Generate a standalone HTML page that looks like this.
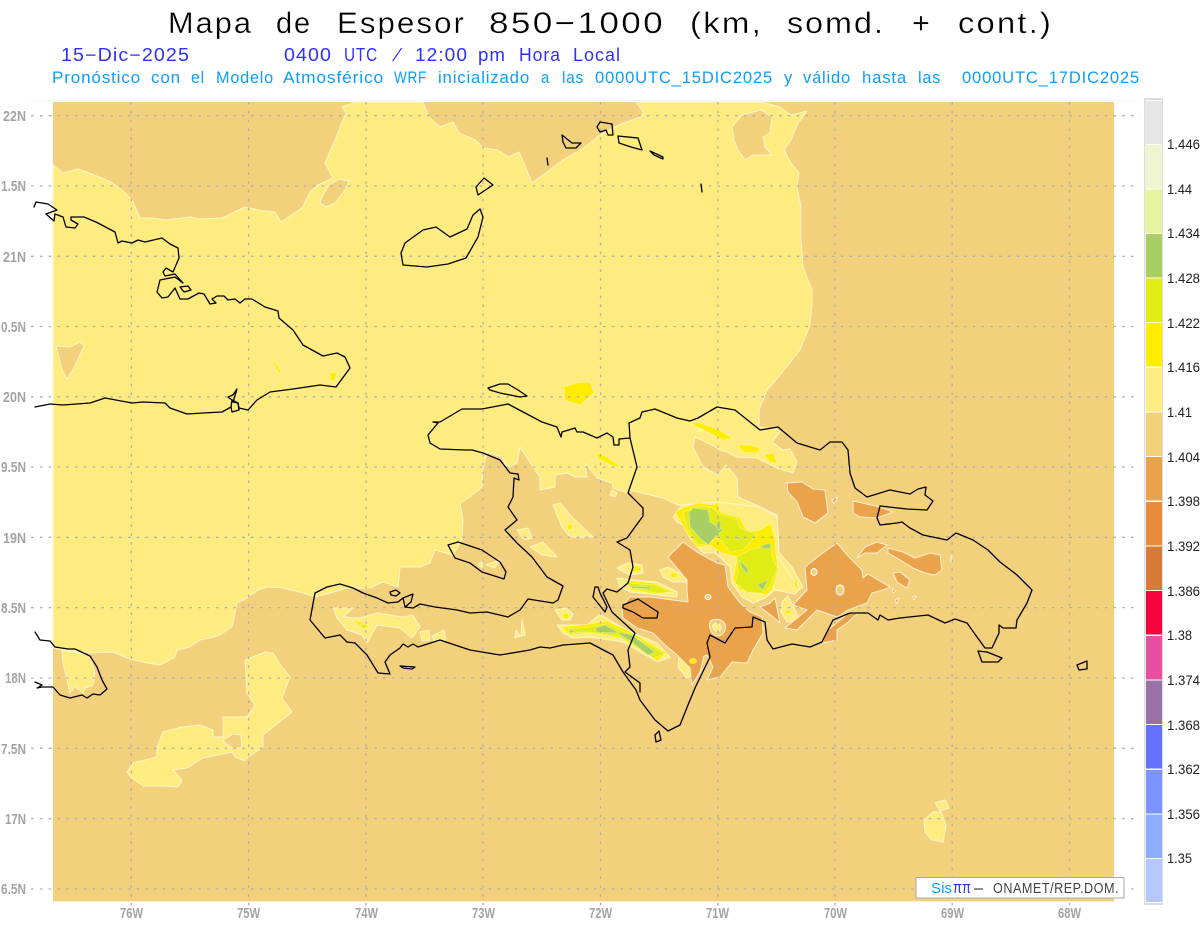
<!DOCTYPE html>
<html><head><meta charset="utf-8"><title>Mapa de Espesor</title>
<style>html,body{margin:0;padding:0;background:#fff}svg{display:block;font-family:"Liberation Sans",sans-serif}</style></head>
<body>
<svg width="1200" height="927" viewBox="0 0 1200 927" xmlns="http://www.w3.org/2000/svg">
<rect width="1200" height="927" fill="#fff"/>
<path d="M30 100.500H1138" stroke="#f4f4f4" fill="none"/>
<rect x="53" y="102" width="1061" height="799" fill="#F3D07C"/>
<rect x="53" y="901" width="1061" height="1" fill="#fbeecb"/>

<!-- 1.41 region -->
<g fill="#FFEC80" stroke="#FFF6C8" stroke-width="1" stroke-linejoin="round">
<path d="M53 165L63 173L78 169L94 175L111 182L122 190L132 200L140 218L153 218L165 220L191 217L199 219L222 218L245 207L264 211L275 212L281 222L302 208L310 192L318 185L333 178L325 163L335 140L342 122L346 113L342 107L356 102L423 102L429 117L440 127L453 122L459 133L475 140L484 148L497 150L509 157L519 152L524 163L532 183L543 175L563 160L585 147L600 135L619 125L640 117L644 113L636 102L761 102L780 107L791 115L807 111L797 125L791 140L784 150L791 163L799 173L797 187L801 207L801 240L803 267L812 290L812 305L810 325L800 350L780 375L767 390L759 410L759 427L777 429L780 432L772 442L783 450L790 449L797 462L793 473L777 468L757 458L737 457L727 452L720 450L712 445L695 437L693 447L703 467L718 475L726 465L737 478L738 497L760 507L777 515L779 547L770 560L700 540L685 505L678 505L663 498L642 493L630 490L628 493L613 488L612 483L597 478L585 463L587 477L575 477L567 473L555 475L555 487L540 490L540 477L533 467L520 447L517 463L507 468L502 457L487 452L483 468L482 487L470 497L460 503L463 520L462 540L453 555L435 550L430 563L420 567L400 567L398 587L383 582L370 588L347 588L330 593L315 597L303 593L283 588L267 587L258 590L247 598L237 603L232 627L220 635L210 638L200 640L190 647L177 650L175 657L160 665L147 663L130 659L113 652L90 653L63 650L53 648Z"/>
<path d="M673 517L682 505L717 502L760 507L777 517L779 553L792 567L803 587L795 593L783 582L775 590L765 598L753 603L742 597L732 583L730 567L723 560L715 553L703 553L690 538L683 525L677 522Z"/>
<path d="M127 772L133 763L157 757L157 747L163 732L182 727L200 725L213 730L213 737L223 737L223 717L247 717L255 705L247 693L245 660L265 652L273 653L282 667L290 677L282 698L292 712L278 723L263 735L263 747L248 757L245 761L235 757L232 752L203 758L187 768L173 770L182 780L178 787L163 786L143 786L132 778Z"/>
<path d="M62 650L90 655L95 673L93 685L85 688L83 693L75 686L70 693L63 663Z"/>
<path d="M333 608L353 608L343 617L360 618L377 613L403 617L413 615L420 627L412 638L400 628L377 625L367 643L362 635L347 630L337 618Z"/>
<path d="M553 505L560 503L572 517L593 537L570 537L562 527Z"/>
<path d="M517 530L528 528L532 538L524 540Z"/>
<path d="M530 547L543 542L557 557L542 555Z"/>
<path d="M486 565L500 560L495 568Z M478 565L483 560L482 568Z"/>
<path d="M557 625L570 625L587 625L600 614L612 622L633 633L657 643L670 657L658 662L640 652L623 642L590 637L573 638L563 633Z"/>
<path d="M617 578L633 580L657 582L677 592L677 597L657 595L630 592L620 587Z"/>
<path d="M617 568L628 563L642 565L643 573L630 575Z"/>
<path d="M660 570L668 567L683 575L687 582L673 582L663 577Z"/>
<path d="M555 610L566 608L573 614L570 620L562 620Z"/>
<path d="M679 657L690 650L703 660L700 673L687 678L678 667Z"/>
<path d="M782 602L788 596L797 614L798 620L787 622L781 612Z"/>
<path d="M763 553L778 557L790 575L800 588L795 594L775 590Z"/>
<path d="M612 490L617 493L615 497L610 495Z M698 428L702 430L700 432Z"/>
<path d="M924 820L933 812L941 812L946 825L943 842L932 840L925 832Z"/>
<path d="M935 803L945 800L949 808L940 811Z"/>
<path d="M420 632L429 630L430 640L422 641Z M432 636L444 630L446 640L434 642Z"/>
<path d="M516 630L520 636L515 638Z M522 620L525 635L521 636Z"/>
</g>

<!-- 1.404 islands inside the yellow region -->
<g fill="#F3D07C" stroke="#FFF6C8" stroke-width="1" stroke-linejoin="round">
<path d="M732 127L742 115L761 110L772 117L770 133L763 137L765 147L772 155L753 155L745 160L738 150L734 140Z"/>
<path d="M56 346L70 347L80 342L84 346L74 368L67 379L62 370Z"/>
<path d="M321 199L328 186L339 179L349 181L345 190L335 203L326 207L320 203Z"/>
<path d="M223 740L233 734L241 735L242 748L232 748L225 743Z"/>
</g>

<!-- 1.398 -->
<g fill="#EBA34B" stroke="#FFEFD2" stroke-width="1" stroke-linejoin="round">
<path d="M668 557L683 542L697 552L717 563L725 565L728 587L740 603L750 612L762 617L763 633L753 650L747 663L732 662L720 677L707 680L713 667L707 655L704 656L700 672L692 685L690 668L677 655L665 645L653 633L637 628L623 618L622 607L630 597L650 597L688 602L687 590L687 580L670 560Z"/>
<path d="M787 483L802 482L813 489L825 490L828 513L815 523L803 517L797 502L788 492Z"/>
<path d="M853 501L880 507L893 512L877 518L860 517L853 513Z"/>
<path d="M837 543L850 558L862 570L863 578L868 574L890 587L883 590L872 593L867 603L848 610L837 617L817 610L797 630L785 628L807 610L793 605L807 590L805 567L820 555L827 550Z"/>
<path d="M865 547L877 542L887 545L877 553L865 553L857 558Z"/>
<path d="M888 548L903 552L915 558L930 553L940 555L942 570L935 575L925 573L913 568L897 558L888 553Z"/>
<path d="M893 573L900 572L910 580L907 588L897 582Z"/>
<path d="M822 643L828 630L850 612L858 613L847 623L837 630L837 640Z"/>
<path d="M770 603L775 598L780 623L773 617L760 607Z"/>
<path d="M832 500L838 497L834 504Z M892 588L896 591L893 593Z M895 600L899 598L897 604Z M912 597L916 596L914 600Z M950 558L952 555L951 562Z"/>
</g>
<path d="M710 622C712 618 722 618 725 624C727 632 722 636 717 636C712 635 708 628 710 622Z" fill="#F3D07C" stroke="#FFEFD2"/>
<path d="M713 625C715 622 720 623 721 627C721 631 718 632 716 631C714 630 712 628 713 625Z" fill="#FFEC80" stroke="#FFF6C8"/>
<ellipse cx="708" cy="597" rx="3" ry="2.500" fill="#F3D07C" stroke="#fff"/>
<ellipse cx="814" cy="572" rx="3" ry="3.500" fill="#F3D07C" stroke="#fff"/>
<ellipse cx="840" cy="590" rx="4" ry="5" fill="#F3D07C" stroke="#fff"/>

<!-- 1.416 bright yellow -->
<g fill="#FFEC00" stroke="#FFF6A0" stroke-width=".6" stroke-linejoin="round">
<path d="M564 387L577 383L590 382L594 393L580 405L565 400Z"/>
<path d="M595 452L607 457L622 468L610 465L598 458Z"/>
<path d="M690 422L700 423L720 430L732 438L723 440L710 433L697 427Z"/>
<path d="M738 445L750 445L760 448L757 453L743 452Z"/>
<path d="M764 455L773 453L777 463L770 462Z"/>
<path d="M675 512L683 508L698 503L713 505L718 502L720 512L740 518L747 532L760 530L770 523L775 537L775 545L778 570L773 588L767 595L740 590L733 580L737 557L720 552L710 545L697 547L687 533L680 520Z"/>
<path d="M562 627L590 624L607 621L627 630L653 645L667 653L657 661L637 648L620 638L590 633L570 635Z"/>
<path d="M625 580L653 583L675 592L657 594L632 590Z"/>
<ellipse cx="636" cy="569" rx="5" ry="3"/>
<ellipse cx="674" cy="575" rx="4" ry="2.500"/>
<ellipse cx="566" cy="616" rx="3" ry="3"/>
<ellipse cx="693" cy="661" rx="3.500" ry="2.500"/>
<ellipse cx="788" cy="612" rx="3" ry="2"/>
<ellipse cx="796" cy="584" rx="1.500" ry="4"/>
<ellipse cx="570" cy="527" rx="2.500" ry="3"/>
<path d="M352 620L360 622L368 625L368 629L362 628Z"/>
<path d="M273 359L282 373L279 373L273 362Z"/>
<path d="M330 373L338 372L333 382L330 380Z"/>
<path d="M259 326L262 328L260 329Z"/>
</g>

<!-- 1.422 lime -->
<g fill="#E1EB14" stroke="#F4F48C" stroke-width=".6" stroke-linejoin="round">
<path d="M683 512L700 506L713 508L718 513L737 520L740 528L753 533L757 533L750 542L743 550L730 552L723 542L717 538L710 543L698 545L688 530L685 520Z"/>
<path d="M737 557L750 550L767 545L772 548L772 557L777 568L770 587L762 593L747 592L735 583L738 573Z"/>
<path d="M568 629L590 627L607 624L627 633L653 647L665 654L653 658L635 645L618 636L590 632L573 633Z"/>
<path d="M625 583L653 585L672 592L657 593L633 588Z"/>
<path d="M360 624L367 625L367 628L362 628Z"/>
</g>

<!-- 1.428 green -->
<g fill="#A8CE64" stroke="#DDEB98" stroke-width=".6" stroke-linejoin="round">
<path d="M689 512L693 508L708 510L710 522L723 530L715 537L708 545L700 538L690 527Z"/>
<path d="M739 560L748 568L748 575L742 568Z"/>
<path d="M757 585L768 580L763 590Z"/>
<path d="M595 628L605 625L617 632L632 635L655 652L648 655L633 643L618 633L597 632Z"/>
<path d="M761 546L770 543L771 548L763 549Z M717 522L721 521L720 530L717 529Z M735 536L741 538L738 540Z M569 630L577 631L570 633Z M630 586L650 587L652 589L632 588Z"/>
</g>

<!-- lat/lon dotted grid -->
<g stroke="#aeaeae" stroke-width="1.300" fill="none" stroke-dasharray="2.600 6.200">
<path d="M31 115.700H1140"/><path d="M31 186H1140"/><path d="M31 256.300H1140"/><path d="M31 326.500H1140"/><path d="M31 396.800H1140"/><path d="M31 467H1140"/><path d="M31 537.300H1140"/><path d="M31 607.600H1140"/><path d="M31 678H1140"/><path d="M31 748.300H1140"/><path d="M31 818.600H1140"/><path d="M31 889H1140"/>
<path d="M131.300 102V908"/><path d="M248.600 102V908"/><path d="M366 102V908"/><path d="M483 102V908"/><path d="M600.500 102V908"/><path d="M717.800 102V908"/><path d="M835 102V908"/><path d="M952.200 102V908"/><path d="M1069.500 102V908"/>
</g>

<!-- coastlines -->
<g fill="none" stroke="#000" stroke-width="1.300" stroke-linejoin="round" stroke-linecap="round">
<path d="M34 207L36 202L48 204L57 210L46 214L54 221L55 214L63 217L66 227L75 228L78 224L71 220L71 217L84 217L96 222L115 232L118 243L122 241L132 243L138 240L145 242L162 238L170 244L178 248L179 258L173 272L166 268L163 272L165 276L175 274L183 283L175 277L160 280L157 292L162 298L168 297L175 288L180 299L188 299L199 293L204 294L210 304L216 303L212 299L217 296L224 296L228 300L235 299L240 303L245 299L252 299L265 307L278 311L279 318L293 330L303 345L323 356L337 353L345 357L350 368L336 387L320 385L293 389L270 392L257 400L248 410L239 408L238 403L233 402L237 389L233 395L228 397L232 400L231 407L222 412L203 413L187 414L170 408L165 403L143 402L132 403L105 398L90 403L63 405L50 404L35 407"/>
<path d="M232 400L238 403L239 410L232 412L231 407"/>
<path d="M180 287L188 286L191 290L184 292Z"/>
<path d="M35 632L40 640L50 641L55 647L68 649L75 649L90 656L97 667L102 680L107 689L100 695L93 694L87 698L82 695L70 698L60 695L53 687L42 687L37 688L42 685L35 682"/>
<path d="M562 135L572 143L581 143L576 148L566 148L563 142Z"/>
<path d="M547 158L548 165"/>
<path d="M484 178L493 185L478 195L476 187Z"/>
<path d="M480 209L483 217L478 237L466 258L448 264L427 267L403 265L401 253L405 243L423 230L436 227L450 237L467 229L473 215Z"/>
<path d="M597 127L600 122L612 124L613 135L608 135L606 130L600 132Z"/>
<path d="M618 136L638 138L642 150L631 147L619 143Z"/>
<path d="M650 151L663 157L663 159L654 155Z"/>
<path d="M701 184L702 192"/>
<path d="M488 388L500 384L508 384L518 390L527 396L520 397L500 393L490 390Z"/>
<!-- Hispaniola -->
<path d="M433 422L440 422L462 409L482 409L508 404L542 422L557 427L561 437L562 432L575 428L577 432L583 432L597 438L607 433L613 437L614 445L619 445L619 439L630 438L629 423L640 418L642 412L655 409L677 418L690 421L698 418L717 407L735 410L760 430L778 427L797 443L820 450L830 442L842 442L848 450L850 473L855 488L867 497L890 490L910 494L918 489L926 487L925 495L933 501L927 510L907 509L880 506L877 518L880 525L897 523L902 522L910 528L923 535L947 540L956 533L973 540L988 550L1000 562L1017 575L1032 590L1027 603L1017 620L1016 628L1003 628L999 625L999 633L992 648L985 648L977 637L967 623L955 619L945 623L928 615L900 618L888 620L880 615L878 620L868 613L850 613L833 620L822 642L810 647L792 644L773 649L767 640L765 622L753 617L752 627L735 628L725 643L710 635L707 643L710 657L695 688L688 705L680 725L668 731L655 720L640 700L636 690L623 672L613 655L590 643L563 645L550 648L540 647L530 650L500 655L470 650L440 640L418 647L413 644L408 647L403 644L400 648L390 655L385 662L390 674L378 673L367 655L355 643L347 642L340 635L325 638L310 620L315 593L327 587L340 584L353 588L363 593L377 598L388 603L398 602L403 598L405 607L413 608L420 604L435 607L457 610L470 613L487 612L508 617L520 610L528 599L553 603L558 600L563 586L547 577L532 557L517 543L505 530L517 520L508 507L513 497L514 478L519 480L518 474L510 473L500 460L483 453L472 450L465 450L440 449L430 443L428 435L438 423Z"/>
<path d="M630 438L637 467L628 493L643 508L643 516L627 538L617 542L630 550L633 567L628 583L617 592L607 589L603 593L612 612L635 633L628 650L630 667L625 672L640 683L640 692"/>
<path d="M595 587L593 597L605 612L607 607L600 593L598 587Z"/>
<path d="M448 545L458 542L482 550L500 562L506 572L504 579L482 572L470 563L455 558Z"/>
<path d="M623 605L638 599L658 612L657 618L643 618L633 612L623 608Z"/>
<path d="M978 651L987 652L1002 658L998 662L982 662Z"/>
<path d="M655 735L659 731L661 740L656 742Z"/>
<path d="M1077 665L1087 661L1087 669L1079 670Z"/>
<path d="M400 666L415 667L412 669L403 668Z"/>
<path d="M390 592L396 590L400 593L396 596L391 595Z"/>
<path d="M403 598L413 594L411 602L405 607"/>
</g>

<!-- axis labels -->
<g fill="#a3a3a3" font-size="15" font-weight="bold" text-anchor="end">
<text x="26" y="121" textLength="23" lengthAdjust="spacingAndGlyphs">22N</text>
<text x="26" y="191" textLength="25" lengthAdjust="spacingAndGlyphs">1.5N</text>
<text x="26" y="262" textLength="23" lengthAdjust="spacingAndGlyphs">21N</text>
<text x="26" y="332" textLength="25" lengthAdjust="spacingAndGlyphs">0.5N</text>
<text x="26" y="402" textLength="23" lengthAdjust="spacingAndGlyphs">20N</text>
<text x="26" y="472" textLength="25" lengthAdjust="spacingAndGlyphs">9.5N</text>
<text x="26" y="543" textLength="23" lengthAdjust="spacingAndGlyphs">19N</text>
<text x="26" y="613" textLength="25" lengthAdjust="spacingAndGlyphs">8.5N</text>
<text x="26" y="683" textLength="21" lengthAdjust="spacingAndGlyphs">18N</text>
<text x="26" y="754" textLength="25" lengthAdjust="spacingAndGlyphs">7.5N</text>
<text x="26" y="824" textLength="21" lengthAdjust="spacingAndGlyphs">17N</text>
<text x="26" y="894" textLength="25" lengthAdjust="spacingAndGlyphs">6.5N</text>
</g>
<g fill="#a3a3a3" font-size="15" font-weight="bold">
<text x="120" y="918" textLength="23" lengthAdjust="spacingAndGlyphs">76W</text>
<text x="237" y="918" textLength="23" lengthAdjust="spacingAndGlyphs">75W</text>
<text x="355" y="918" textLength="23" lengthAdjust="spacingAndGlyphs">74W</text>
<text x="472" y="918" textLength="23" lengthAdjust="spacingAndGlyphs">73W</text>
<text x="589" y="918" textLength="23" lengthAdjust="spacingAndGlyphs">72W</text>
<text x="706" y="918" textLength="23" lengthAdjust="spacingAndGlyphs">71W</text>
<text x="824" y="918" textLength="23" lengthAdjust="spacingAndGlyphs">70W</text>
<text x="941" y="918" textLength="23" lengthAdjust="spacingAndGlyphs">69W</text>
<text x="1058" y="918" textLength="23" lengthAdjust="spacingAndGlyphs">68W</text>
</g>

<!-- titles -->
<g font-size="30" fill="#000" stroke="#fff" stroke-width=".3" letter-spacing="2">
<text x="168" y="33" textLength="85" lengthAdjust="spacingAndGlyphs">Mapa</text>
<text x="276" y="33" textLength="36" lengthAdjust="spacingAndGlyphs">de</text>
<text x="337" y="33" textLength="129" lengthAdjust="spacingAndGlyphs">Espesor</text>
<text x="489" y="33" textLength="176" lengthAdjust="spacingAndGlyphs">850−1000</text>
<text x="690" y="33" textLength="73" lengthAdjust="spacingAndGlyphs">(km,</text>
<text x="787" y="33" textLength="98" lengthAdjust="spacingAndGlyphs">somd.</text>
<text x="912" y="33" textLength="20" lengthAdjust="spacingAndGlyphs">+</text>
<text x="958" y="33" textLength="95" lengthAdjust="spacingAndGlyphs">cont.)</text>
</g>
<g font-size="18" fill="#2f2fff" letter-spacing="1">
<text x="61" y="61" textLength="129" lengthAdjust="spacingAndGlyphs">15−Dic−2025</text>
<text x="284" y="61" textLength="48" lengthAdjust="spacingAndGlyphs">0400</text>
<text x="344" y="61" textLength="34" lengthAdjust="spacingAndGlyphs">UTC</text>
<text transform="translate(392 61) skewX(-22)" x="0" y="0">/</text>
<text x="415" y="61" textLength="53" lengthAdjust="spacingAndGlyphs">12:00</text>
<text x="478" y="61" textLength="28" lengthAdjust="spacingAndGlyphs">pm</text>
<text x="519" y="61" textLength="42" lengthAdjust="spacingAndGlyphs">Hora</text>
<text x="573" y="61" textLength="48" lengthAdjust="spacingAndGlyphs">Local</text>
</g>
<g font-size="16.500" fill="#0a9eff" letter-spacing=".8">
<text x="52" y="83" textLength="89" lengthAdjust="spacingAndGlyphs">Pronóstico</text>
<text x="151" y="83" textLength="30" lengthAdjust="spacingAndGlyphs">con</text>
<text x="191" y="83" textLength="14" lengthAdjust="spacingAndGlyphs">el</text>
<text x="216" y="83" textLength="58" lengthAdjust="spacingAndGlyphs">Modelo</text>
<text x="283" y="83" textLength="101" lengthAdjust="spacingAndGlyphs">Atmosférico</text>
<text x="394" y="83" textLength="33" lengthAdjust="spacingAndGlyphs">WRF</text>
<text x="438" y="83" textLength="92" lengthAdjust="spacingAndGlyphs">inicializado</text>
<text x="541" y="83" textLength="9" lengthAdjust="spacingAndGlyphs">a</text>
<text x="562" y="83" textLength="22" lengthAdjust="spacingAndGlyphs">las</text>
<text x="595" y="83" textLength="178" lengthAdjust="spacingAndGlyphs">0000UTC_15DIC2025</text>
<text x="784" y="83" textLength="9" lengthAdjust="spacingAndGlyphs">y</text>
<text x="803" y="83" textLength="48" lengthAdjust="spacingAndGlyphs">válido</text>
<text x="862" y="83" textLength="45" lengthAdjust="spacingAndGlyphs">hasta</text>
<text x="918" y="83" textLength="23" lengthAdjust="spacingAndGlyphs">las</text>
<text x="962" y="83" textLength="178" lengthAdjust="spacingAndGlyphs">0000UTC_17DIC2025</text>
</g>

<!-- colourbar -->
<rect x="1144" y="98" width="19" height="807" fill="#dcdcdc"/>
<rect x="1145.500" y="100" width="16" height="803" fill="#fff"/>
<g>
<rect x="1145" y="101" width="17" height="43" fill="#E6E6E6"/>
<rect x="1145" y="145" width="17" height="43.500" fill="#F0F4D0"/>
<rect x="1145" y="189.500" width="17" height="43.500" fill="#E6F4A0"/>
<rect x="1146" y="234" width="16" height="43.500" fill="#A8CE64"/>
<rect x="1146" y="278.500" width="16" height="43.500" fill="#E1EB14"/>
<rect x="1146" y="323" width="16" height="43.500" fill="#FFEC00"/>
<rect x="1146" y="368" width="16" height="43.500" fill="#FFEC80"/>
<rect x="1146" y="412.500" width="16" height="43.500" fill="#F3D07C"/>
<rect x="1146" y="457" width="16" height="43.500" fill="#EBA34B"/>
<rect x="1146" y="502" width="16" height="43.500" fill="#E68C3A"/>
<rect x="1146" y="546.500" width="16" height="43.500" fill="#D67A38"/>
<rect x="1146" y="591" width="16" height="43.500" fill="#F5053C"/>
<rect x="1146" y="636" width="16" height="43.500" fill="#E94FA0"/>
<rect x="1146" y="680.500" width="16" height="43.500" fill="#9A70A8"/>
<rect x="1146" y="725" width="16" height="43.500" fill="#6470FF"/>
<rect x="1146" y="770" width="16" height="43.500" fill="#7B93FF"/>
<rect x="1146" y="814.500" width="16" height="43.500" fill="#8DAEFF"/>
<rect x="1146" y="859" width="16" height="43" fill="#B4C8FF"/>
</g>
<g fill="#222" font-size="14">
<text x="1167" y="149" textLength="33" lengthAdjust="spacingAndGlyphs">1.446</text>
<text x="1167" y="194" textLength="25" lengthAdjust="spacingAndGlyphs">1.44</text>
<text x="1167" y="238" textLength="33" lengthAdjust="spacingAndGlyphs">1.434</text>
<text x="1167" y="283" textLength="33" lengthAdjust="spacingAndGlyphs">1.428</text>
<text x="1167" y="328" textLength="33" lengthAdjust="spacingAndGlyphs">1.422</text>
<text x="1167" y="372" textLength="33" lengthAdjust="spacingAndGlyphs">1.416</text>
<text x="1167" y="417" textLength="25" lengthAdjust="spacingAndGlyphs">1.41</text>
<text x="1167" y="462" textLength="33" lengthAdjust="spacingAndGlyphs">1.404</text>
<text x="1167" y="506" textLength="33" lengthAdjust="spacingAndGlyphs">1.398</text>
<text x="1167" y="551" textLength="33" lengthAdjust="spacingAndGlyphs">1.392</text>
<text x="1167" y="596" textLength="33" lengthAdjust="spacingAndGlyphs">1.386</text>
<text x="1167" y="640" textLength="25" lengthAdjust="spacingAndGlyphs">1.38</text>
<text x="1167" y="685" textLength="33" lengthAdjust="spacingAndGlyphs">1.374</text>
<text x="1167" y="730" textLength="33" lengthAdjust="spacingAndGlyphs">1.368</text>
<text x="1167" y="774" textLength="33" lengthAdjust="spacingAndGlyphs">1.362</text>
<text x="1167" y="819" textLength="33" lengthAdjust="spacingAndGlyphs">1.356</text>
<text x="1167" y="863" textLength="25" lengthAdjust="spacingAndGlyphs">1.35</text>
</g>

<!-- credit box -->
<rect x="916" y="877.500" width="208" height="20.500" fill="#fff" stroke="#aaa" stroke-width="1"/>
<text x="931" y="893" font-size="15" fill="#0a9eff" textLength="21" lengthAdjust="spacingAndGlyphs">Sis</text>
<text x="953" y="893" font-size="17" fill="#2a2aff" textLength="18" lengthAdjust="spacingAndGlyphs">ππ</text>
<path d="M974 889H983" stroke="#444" stroke-width="1.200"/>
<text x="993" y="893" font-size="15" fill="#444" letter-spacing=".6" textLength="126" lengthAdjust="spacingAndGlyphs">ONAMET/REP.DOM.</text>
</svg>
</body></html>
